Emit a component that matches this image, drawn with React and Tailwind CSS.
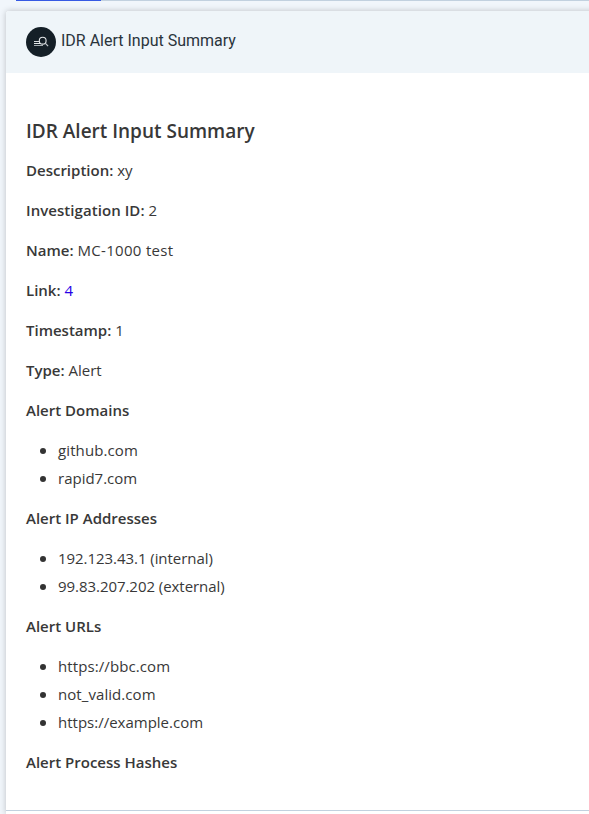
const fields = [
  { label: 'Description:', value: 'xy' },
  { label: 'Investigation ID:', value: '2', labelSpacing: 'tracking-[0.06px]' },
  { label: 'Name:', value: 'MC-1000 test', spacing: 'tracking-[0.32px]' },
  { label: 'Link:', value: '4', link: true },
  { label: 'Timestamp:', value: '1' },
  { label: 'Type:', value: 'Alert' },
];

const sections = [
  { title: 'Alert Domains', items: [{ text: 'github.com', spacing: 'tracking-[0.1px]' }, { text: 'rapid7.com' }] },
  {
    title: 'Alert IP Addresses',
    items: [
      { text: '192.123.43.1 (internal)', spacing: 'tracking-[-0.05px]' },
      { text: '99.83.207.202 (external)', spacing: 'tracking-[-0.05px]' },
    ],
  },
  {
    title: 'Alert URLs',
    items: [
      { text: 'https://bbc.com', spacing: 'tracking-[0.1px]' },
      { text: 'not_valid.com', spacing: 'tracking-[0.07px]' },
      { text: 'https://example.com' },
    ],
  },
  { title: 'Alert Process Hashes', items: [] },
];

function SearchListIcon() {
  return (
    <svg viewBox="0 0 30 30" className="size-[30px] shrink-0" fill="none">
      <circle cx="15" cy="15" r="15" fill="#141f27" />
      <path d="M8 14.5h5" stroke="#d5dadd" />
      <path d="M8 16.5h6.5" stroke="#e3e7e9" />
      <path d="M8 18.5h9" stroke="#a3abb0" />
      <circle cx="16.7" cy="13.7" r="3.4" stroke="#e3e7e9" strokeWidth="1.1" />
      <path d="M19.2 16.2l2.9 3" stroke="#c3c9cd" strokeWidth="1.2" />
    </svg>
  );
}

export default function App() {
  return (
    <div className="flex h-[814px] w-[589px] flex-col overflow-hidden bg-[#f1f6fb]">
      <div className="ml-4 h-px shrink-0 bg-[#c2d1df]">
        <div className="h-px w-[85px] bg-[#3659e3]" />
      </div>
      <main className="-mr-2 ml-1.5 mt-2.5 flex flex-1 flex-col rounded-tl-[3px] bg-white shadow-[0_0_6px_rgba(0,0,0,0.22)]">
        <header className="flex h-[62px] shrink-0 items-center gap-[5px] rounded-tl-[3px] bg-[#eff5f9] pl-5 font-['Roboto',sans-serif] text-base text-[#2a343c]">
          <SearchListIcon />
          <span className="-mt-0.5">IDR Alert Input Summary</span>
        </header>
        <article className="flex h-[738px] shrink-0 flex-col gap-3 border-b border-[#c2d1df] pl-5 pt-[44px] font-['Open_Sans','Noto_Sans',sans-serif] text-[15px] leading-7 text-[#383838]">
          <h1 className="-mb-px text-[19px] font-semibold leading-7">IDR Alert Input Summary</h1>
          {fields.map((f) => (
            <p key={f.label}>
              <strong className={`font-semibold ${f.labelSpacing ?? ''}`}>{f.label}</strong>{' '}
              {f.link ? (
                <a href="#" className="text-[#2600e6]">{f.value}</a>
              ) : (
                <span className={f.spacing}>{f.value}</span>
              )}
            </p>
          ))}
          {sections.map((s) => (
            <section key={s.title} className="flex flex-col gap-3">
              <h2 className="font-semibold">{s.title}</h2>
              {s.items.length > 0 && (
                <ul>
                  {s.items.map((item) => (
                    <li key={item.text} className="flex items-center pl-3.5">
                      <span className="mr-3 mt-px size-1.5 rounded-full bg-[#333]" />
                      <span className={item.spacing}>{item.text}</span>
                    </li>
                  ))}
                </ul>
              )}
            </section>
          ))}
        </article>
      </main>
    </div>
  );
}
